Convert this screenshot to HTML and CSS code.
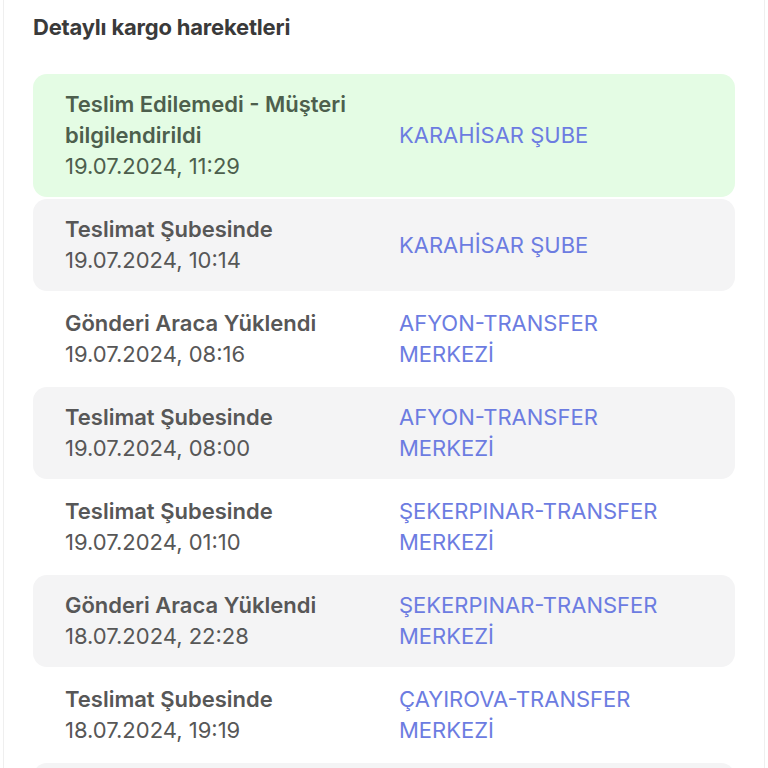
FILE: index.html
```html
<!DOCTYPE html>
<html lang="tr">
<head>
  <meta charset="UTF-8">
  <meta name="viewport" content="width=device-width, initial-scale=1.0">
  <title>Kargo Hareketleri</title>
  <link rel="stylesheet" href="styles.css">
</head>
<body>
  <div class="panel">
    <h2 class="panel-title">Detaylı kargo hareketleri</h2>

    <div class="moves">
      <div class="move current">
        <div class="move-info">
          <div class="move-status">Teslim Edilemedi - Müşteri bilgilendirildi</div>
          <div class="move-date">19.07.2024, 11:29</div>
        </div>
        <div class="move-place">KARAHİSAR ŞUBE</div>
      </div>

      <div class="move shaded">
        <div class="move-info">
          <div class="move-status">Teslimat Şubesinde</div>
          <div class="move-date">19.07.2024, 10:14</div>
        </div>
        <div class="move-place">KARAHİSAR ŞUBE</div>
      </div>

      <div class="move">
        <div class="move-info">
          <div class="move-status">Gönderi Araca Yüklendi</div>
          <div class="move-date">19.07.2024, 08:16</div>
        </div>
        <div class="move-place">AFYON-TRANSFER MERKEZİ</div>
      </div>

      <div class="move shaded">
        <div class="move-info">
          <div class="move-status">Teslimat Şubesinde</div>
          <div class="move-date">19.07.2024, 08:00</div>
        </div>
        <div class="move-place">AFYON-TRANSFER MERKEZİ</div>
      </div>

      <div class="move">
        <div class="move-info">
          <div class="move-status">Teslimat Şubesinde</div>
          <div class="move-date">19.07.2024, 01:10</div>
        </div>
        <div class="move-place">ŞEKERPINAR-TRANSFER MERKEZİ</div>
      </div>

      <div class="move shaded">
        <div class="move-info">
          <div class="move-status">Gönderi Araca Yüklendi</div>
          <div class="move-date">18.07.2024, 22:28</div>
        </div>
        <div class="move-place">ŞEKERPINAR-TRANSFER MERKEZİ</div>
      </div>

      <div class="move">
        <div class="move-info">
          <div class="move-status">Teslimat Şubesinde</div>
          <div class="move-date">18.07.2024, 19:19</div>
        </div>
        <div class="move-place">ÇAYIROVA-TRANSFER MERKEZİ</div>
      </div>

      <div class="move shaded tail"></div>
    </div>
  </div>
</body>
</html>
```

FILE: styles.css
```css
* {
  box-sizing: border-box;
  font-family: 'Inter', 'Noto Sans', sans-serif;
}
body {
  margin: 0;
  background-color: white;
  overflow: hidden;
}
.panel {
  margin: 0 3px;
  padding: 0 29px;
  border-left: 1px solid #efefef;
  border-right: 1px solid #efefef;
  min-height: 800px;
}
.panel-title {
  margin: 0;
  padding: 13px 0 33px;
  font-size: 22px;
  line-height: 28px;
  font-weight: 700;
  color: #3a3a3a;
  letter-spacing: -0.2px;
}
.moves {
  display: flex;
  flex-direction: column;
  gap: 2px;
}
.move {
  display: grid;
  grid-template-columns: 334px 1fr;
  align-items: center;
  padding: 15px 32px;
  border-radius: 14px;
  font-size: 22px;
  line-height: 31px;
}
.move.shaded {
  background-color: #f4f4f5;
}
.move.current {
  background-color: #e4fce4;
}
.move.tail {
  height: 92px;
}
.move-status {
  font-weight: 600;
  color: #575757;
}
.move-date {
  color: #575757;
}
.move.current .move-status,
.move.current .move-date {
  color: #4d5f4d;
}
.move-place {
  color: #6c7ce1;
  padding-right: 30px;
}
```
